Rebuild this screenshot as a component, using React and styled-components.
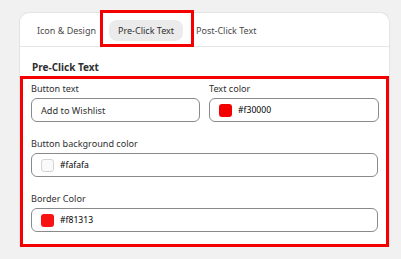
import styled, { createGlobalStyle } from "styled-components";

const GlobalStyle = createGlobalStyle`
  html, body {
    margin: 0;
    padding: 0;
    background: #f1f1f1;
  }
  body {
    font-family: "Noto Sans", "Open Sans", sans-serif;
    color: #303030;
  }
`;

const tabs = ["Icon & Design", "Pre-Click Text", "Post-Click Text"];

export default function App() {
  return (
    <>
      <GlobalStyle />
      <Page>
        <Card>
          <TabBar>
            {tabs.map((t) => (
              <Tab key={t} $active={t === "Pre-Click Text"}>
                {t}
                {t === "Pre-Click Text" && <Highlight />}
              </Tab>
            ))}
          </TabBar>
          <Heading>Pre-Click Text</Heading>
          <Section>
            <Row $cols={2}>
              <Field>
                <Label>Button text</Label>
                <Input>Add to Wishlist</Input>
              </Field>
              <Field>
                <Label>Text color</Label>
                <Input>
                  <Swatch $color="#f30000" />
                  <Hex>#f30000</Hex>
                </Input>
              </Field>
            </Row>
            <Row>
              <Field>
                <Label>Button background color</Label>
                <Input>
                  <Swatch $color="#fafafa" $light />
                  <Hex>#fafafa</Hex>
                </Input>
              </Field>
            </Row>
            <Row>
              <Field>
                <Label>Border Color</Label>
                <Input>
                  <Swatch $color="#f81313" />
                  <Hex>#f81313</Hex>
                </Input>
              </Field>
            </Row>
          </Section>
        </Card>
      </Page>
    </>
  );
}

const Page = styled.div`
  padding: 12px 0 0 19px;
`;

const Card = styled.div`
  width: 369px;
  background: #fff;
  border: 1px solid #e3e3e3;
  border-bottom: none;
  border-radius: 10px 10px 0 0;
`;

const TabBar = styled.div`
  display: flex;
  gap: 4px;
  padding: 7px 8px 5px;
  border-bottom: 1px solid #e6e6e6;
`;

const Tab = styled.div`
  position: relative;
  height: 21px;
  line-height: 21px;
  padding: 0 9px;
  border-radius: 8px;
  font-size: 9px;
  color: ${(p) => (p.$active ? "#303030" : "#4a4a4a")};
  background: ${(p) => (p.$active ? "#ebebeb" : "transparent")};
`;

const Highlight = styled.span`
  position: absolute;
  left: -9px;
  right: -11px;
  top: -10px;
  bottom: -6px;
  border: 3px solid #f50000;
`;

const Heading = styled.div`
  padding: 11px 12px 0;
  height: 18px;
  line-height: 18px;
  font-size: 10px;
  font-weight: 700;
  color: #303030;
`;

const Section = styled.div`
  border: 3px solid #f50000;
  padding: 3px 8px 12px;
  display: flex;
  flex-direction: column;
  gap: 15px;
`;

const Row = styled.div`
  display: grid;
  grid-template-columns: ${(p) => (p.$cols === 2 ? "169px 170px" : "1fr")};
  gap: 9px;
`;

const Field = styled.div`
  display: flex;
  flex-direction: column;
  gap: 2px;
`;

const Label = styled.div`
  height: 14px;
  line-height: 14px;
  font-size: 9.1px;
  color: #303030;
`;

const Input = styled.div`
  box-sizing: border-box;
  height: 24px;
  display: flex;
  align-items: center;
  gap: 6px;
  padding: 0 9px;
  border: 1px solid #8a8a8a;
  border-radius: 6px;
  font-size: 9.2px;
  color: #303030;
`;

const Swatch = styled.span`
  width: 13px;
  height: 13px;
  border-radius: 3px;
  background: ${(p) => p.$color};
  border: 1px solid ${(p) => (p.$light ? "#d4d4d4" : "transparent")};
  box-sizing: border-box;
`;

const Hex = styled.span`
  font-size: 8.6px;
  color: #000;
`;
